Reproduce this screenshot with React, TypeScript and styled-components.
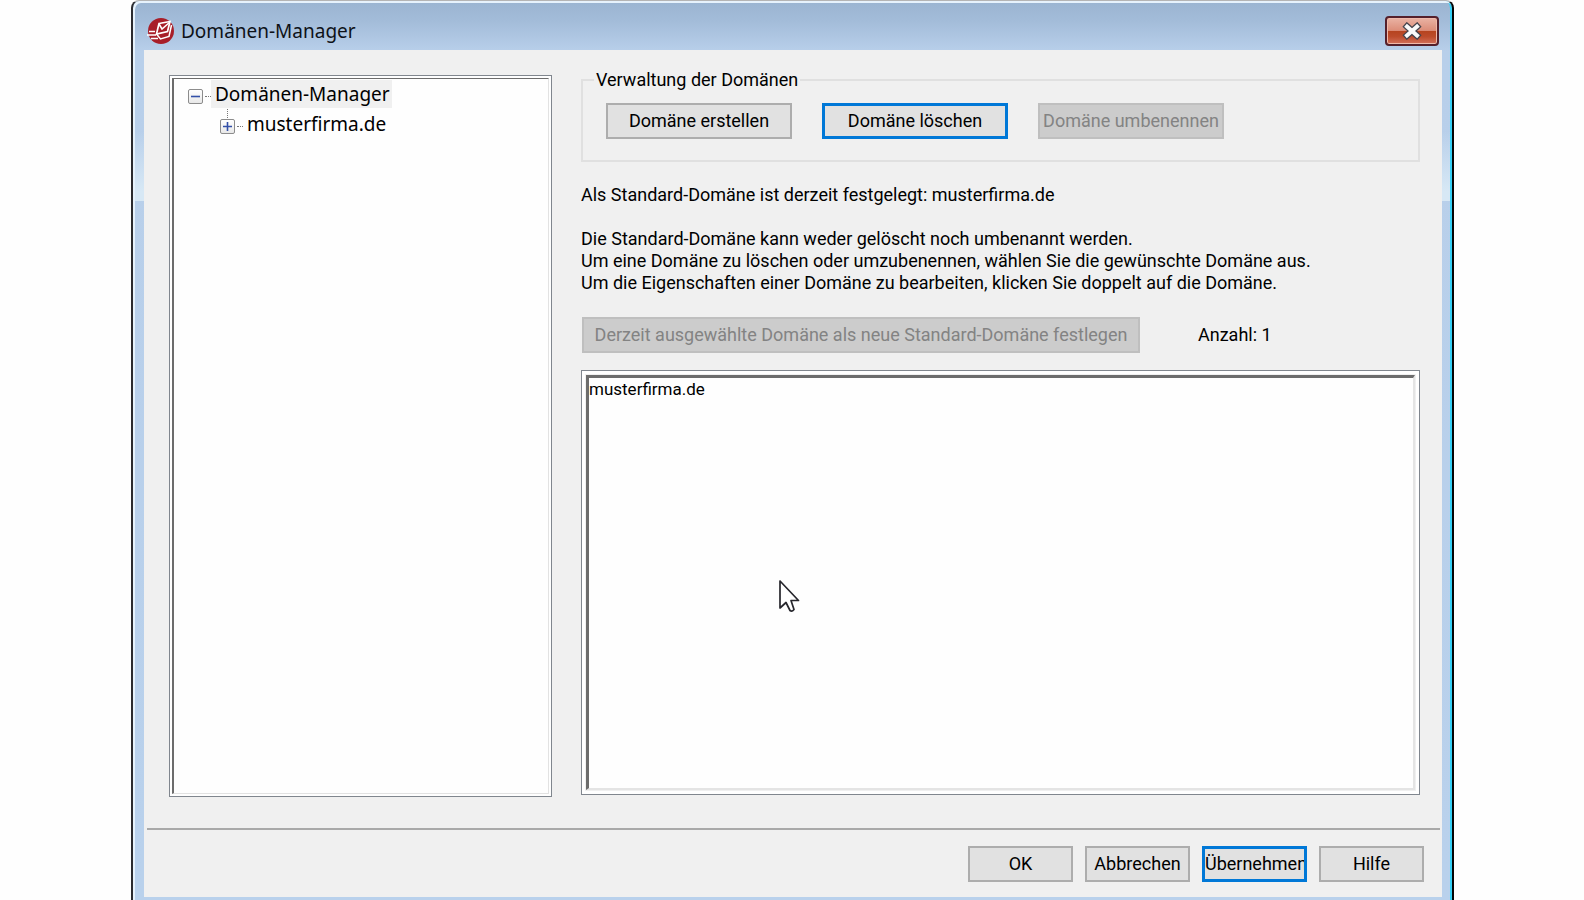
import React from "react";
import styled, { createGlobalStyle, css } from "styled-components";

const GlobalStyle = createGlobalStyle`
  *, *::before, *::after { box-sizing: border-box; }
  body {
    margin: 0;
    background: #fefefe;
    color: #000;
    font-family: Roboto, "Liberation Sans", sans-serif;
    font-size: 18px;
    line-height: 22px;
  }
  button, select { font: inherit; color: inherit; margin: 0; }
  p, ul { margin: 0; padding: 0; }
`;

const Desktop = styled.div`
  display: flex;
  min-height: 100vh;
  padding: 0 130px 0 131px;
`;

const Window = styled.main`
  flex: 1;
  display: flex;
  flex-direction: column;
  min-width: 0;
  padding: 0 9px 3px;
  border: solid;
  border-width: 1px 2px 0;
  border-color: #b4b4b4 #050505 #050505 #2b2b2f;
  border-radius: 8px 8px 0 0;
  box-shadow: inset 2px 2px 0 #e6f2fc, inset -2px 0 0 #35d0f6;
  background:
    linear-gradient(#d7e8f500 0, #d7e8f5 60px, #d7e8f5 100%) 2px 130px / calc(100% - 4px) 70px no-repeat,
    linear-gradient(#9ab4d1 0, #a3bcd9 20px, #b8cfea 50px, #b9d1ec 100%);
`;

const TitleBar = styled.header`
  display: flex;
  align-items: center;
  gap: 6px;
  height: 49px;
  padding: 10px 4px 0 5px;
`;

const Title = styled.h1`
  flex: 1;
  margin: 0;
  font: 400 19px/26px "Noto Sans", "Open Sans", sans-serif;
  color: #0e1218;
`;

const CloseButton = styled.button`
  display: grid;
  place-items: center;
  width: 54px;
  height: 30px;
  padding: 0;
  border: 2px solid #55202b;
  border-radius: 4px;
  box-shadow: inset 0 0 0 1px #f0b9aa;
  background: linear-gradient(#eab3a4 0, #dc8d79 48%, #b5431f 50%, #bd4c2c 72%, #d3715b 100%);
`;

const Client = styled.div`
  flex: 1;
  display: flex;
  flex-direction: column;
  margin: 0 1px 0 2px;
  background: #f0f0f0;
`;

const Columns = styled.div`
  flex: 1;
  display: grid;
  grid-template-columns: 383px minmax(0, 1fr);
  gap: 29px;
  padding: 19px 22px 31px 25px;
`;

const TreePane = styled.nav`
  margin-top: 6px;
  padding: 2px;
  border: 1px solid #80868e;
  background: #fefefe;
`;

const Tree = styled.ul`
  height: 100%;
  padding: 0 0 0 14px;
  border: solid;
  border-width: 1px 1px 1px 2px;
  border-color: #6c6c6c #e2e2e2 #e2e2e2 #6c6c6c;
  list-style: none;
`;

const Branch = styled.ul`
  padding-left: 32px;
  list-style: none;
`;

const TreeRow = styled.div`
  display: flex;
  align-items: center;
  height: 30px;
`;

const Expander = styled.button<{ $linked?: boolean }>`
  position: relative;
  flex: none;
  display: grid;
  place-items: center;
  width: 15px;
  height: 15px;
  margin-top: 4px;
  padding: 0;
  border: 1px solid #8c8c8c;
  border-radius: 2px;
  background: linear-gradient(#fff, #e8e8e8);
  &::after {
    content: "";
    position: absolute;
    left: 16px;
    top: 6px;
    width: 6px;
    border-top: 1px dotted #777;
  }
  ${(p) => p.$linked && css`
    &::before {
      content: "";
      position: absolute;
      left: 6px;
      bottom: 15px;
      height: 9px;
      border-left: 1px dotted #777;
    }
  `}
`;

const TreeLabel = styled.span<{ $selected?: boolean }>`
  margin-left: 8px;
  padding: 0 2px 0 4px;
  font: 400 19px/28px "Noto Sans", "Open Sans", sans-serif;
  background: ${(p) => (p.$selected ? "#f0f0f0" : "transparent")};
`;

const Details = styled.section`
  display: flex;
  flex-direction: column;
  align-items: stretch;
  padding-bottom: 2px;
`;

const Group = styled.fieldset`
  display: flex;
  gap: 30px;
  height: 93px;
  min-width: 0;
  margin: 0;
  padding: 12px 23px 0;
  border: 2px solid #e0e0e0;
`;

const Legend = styled.legend`
  margin-left: -12px;
  padding: 0 2px;
`;

const Button = styled.button<{ $width: number; $focused?: boolean }>`
  flex: none;
  width: ${(p) => p.$width}px;
  height: 36px;
  padding: 0;
  overflow: hidden;
  white-space: nowrap;
  border: ${(p) => (p.$focused ? "3px solid #0078d7" : "2px solid #adadad")};
  background: #e1e1e1;
  &:disabled {
    color: #838383;
    border-color: #bfbfbf;
    background: #cccccc;
  }
`;

const Notice = styled.p`
  margin-top: 22px;
`;

const DefaultRow = styled.div`
  display: flex;
  align-items: center;
  gap: 58px;
  margin: 23px 0 17px 1px;
`;

const ListFrame = styled.div`
  position: relative;
  flex: 1;
  display: flex;
  padding: 4px;
  border: 1px solid #80868e;
  box-shadow: inset 0 0 0 3px #fff;
  background: #f0f0f0;
`;

const DomainList = styled.select`
  flex: 1;
  min-height: 160px;
  padding: 0;
  border: solid;
  border-width: 3px 2px 2px 3px;
  border-color: #6c6c6c #e4e4e4 #e4e4e4 #6c6c6c;
  border-radius: 0;
  outline: 0;
  overflow: hidden;
  background: #fefefe;
  font-size: 17px;
`;

const DomainOption = styled.option`
  min-height: 24px;
  padding: 1px 0;
`;

const Pointer = styled.svg`
  position: absolute;
  left: 196px;
  top: 208px;
`;

const Footer = styled.footer`
  display: flex;
  justify-content: flex-end;
  gap: 12px;
  margin: 0 2px 0 3px;
  padding: 16px 16px 15px;
  border-top: 2px solid #a9a9a9;
`;

const AppLogo = () => (
  <svg width="28" height="28" viewBox="0 0 28 28" aria-hidden="true">
    <circle cx="14" cy="14" r="13" fill="#a81e28" />
    <path d="M12 6.500 23 4.500 20.500 14.500 9.500 17Z" fill="#a81e28" stroke="#fff" strokeWidth="1.700" />
    <path d="M12 7 15 12 23 5" fill="none" stroke="#fff" strokeWidth="1.600" />
    <path d="M9.500 17 13.500 22 22 19.500 24.500 8" fill="none" stroke="#fff" strokeWidth="1.500" />
    <path d="M2 14.500H8M0 18H9M4 21.500H11" stroke="#fff" strokeWidth="1.300" />
  </svg>
);

const CloseGlyph = () => (
  <svg width="20" height="18" viewBox="0 0 20 18" aria-hidden="true">
    <path d="M5 4.500 15 13.500M15 4.500 5 13.500" stroke="#45444d" strokeWidth="6.500" strokeLinecap="square" />
    <path d="M5 4.500 15 13.500M15 4.500 5 13.500" stroke="#fafafa" strokeWidth="4" strokeLinecap="square" />
  </svg>
);

const Sign = ({ open }: { open?: boolean }) => (
  <svg width="9" height="9" viewBox="0 0 9 9" aria-hidden="true">
    <path d={open ? "M0 4.500H9" : "M0 4.500H9M4.500 0V9"} stroke="#3450a8" strokeWidth="1.600" />
  </svg>
);

export default function App() {
  return (
    <>
      <GlobalStyle />
      <Desktop>
        <Window>
          <TitleBar>
            <AppLogo />
            <Title>Domänen-Manager</Title>
            <CloseButton type="button" aria-label="Schließen">
              <CloseGlyph />
            </CloseButton>
          </TitleBar>
          <Client>
            <Columns>
              <TreePane aria-label="Domänen">
                <Tree>
                  <li>
                    <TreeRow>
                      <Expander type="button" aria-label="Reduzieren"><Sign open /></Expander>
                      <TreeLabel $selected>Domänen-Manager</TreeLabel>
                    </TreeRow>
                    <Branch>
                      <li>
                        <TreeRow>
                          <Expander type="button" aria-label="Erweitern" $linked><Sign /></Expander>
                          <TreeLabel>musterfirma.de</TreeLabel>
                        </TreeRow>
                      </li>
                    </Branch>
                  </li>
                </Tree>
              </TreePane>
              <Details>
                <Group>
                  <Legend>Verwaltung der Domänen</Legend>
                  <Button type="button" $width={186}>Domäne erstellen</Button>
                  <Button type="button" $width={186} $focused>Domäne löschen</Button>
                  <Button type="button" $width={186} disabled>Domäne umbenennen</Button>
                </Group>
                <Notice>Als Standard-Domäne ist derzeit festgelegt: musterfirma.de</Notice>
                <Notice>
                  Die Standard-Domäne kann weder gelöscht noch umbenannt werden.<br />
                  Um eine Domäne zu löschen oder umzubenennen, wählen Sie die gewünschte Domäne aus.<br />
                  Um die Eigenschaften einer Domäne zu bearbeiten, klicken Sie doppelt auf die Domäne.
                </Notice>
                <DefaultRow>
                  <Button type="button" $width={558} disabled>
                    Derzeit ausgewählte Domäne als neue Standard-Domäne festlegen
                  </Button>
                  <span>Anzahl: 1</span>
                </DefaultRow>
                <ListFrame>
                  <DomainList size={10} aria-label="Domänenliste">
                    <DomainOption>musterfirma.de</DomainOption>
                  </DomainList>
                  <Pointer width="24" height="36" viewBox="0 0 24 36" aria-hidden="true">
                    <path
                      d="M2 2V29L8 23.500 12 31.500Q14 33 16 30.500L13 21.500H20.500Z"
                      fill="#fff"
                      stroke="#26262c"
                      strokeWidth="1.700"
                      strokeLinejoin="round"
                    />
                  </Pointer>
                </ListFrame>
              </Details>
            </Columns>
            <Footer>
              <Button type="button" $width={105}>OK</Button>
              <Button type="button" $width={105}>Abbrechen</Button>
              <Button type="button" $width={105} $focused>Übernehmen</Button>
              <Button type="button" $width={105}>Hilfe</Button>
            </Footer>
          </Client>
        </Window>
      </Desktop>
    </>
  );
}
